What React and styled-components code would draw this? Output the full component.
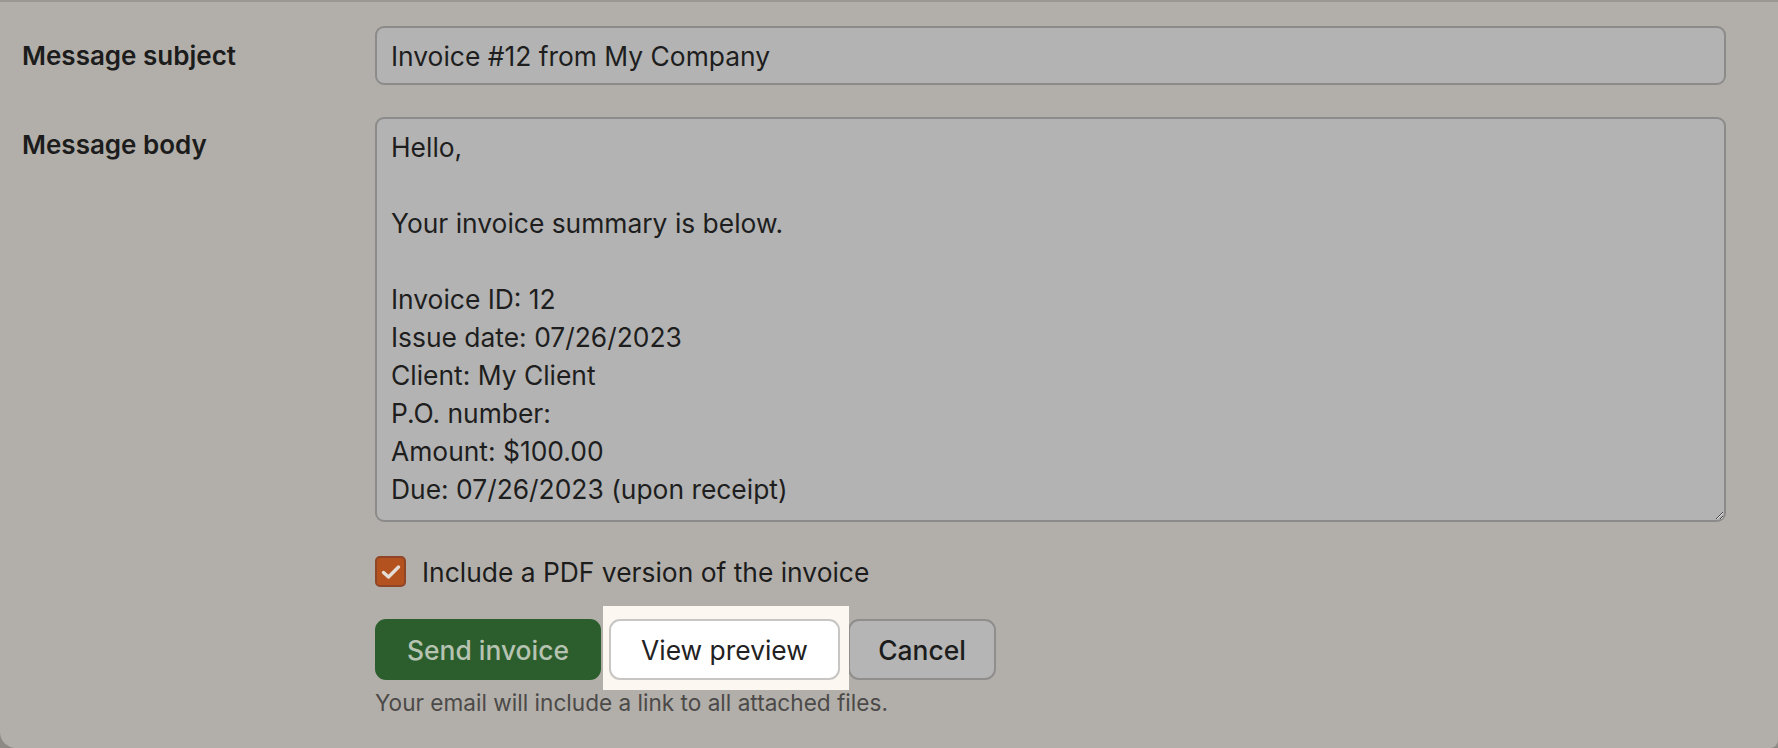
import React, { useState } from 'react';
import styled, { createGlobalStyle } from 'styled-components';

const GlobalStyle = createGlobalStyle`
  html, body {
    margin: 0;
    padding: 0;
    background: #8d8a86;
  }
  body {
    font-family: Inter, "Noto Sans", "Liberation Sans", sans-serif;
    color: #1d1d1d;
  }
  * { box-sizing: border-box; }
`;

const Card = styled.div`
  width: 1778px;
  height: 748px;
  background: #b2afaa;
  border-top: 2px solid #9b9792;
  border-radius: 0 0 8px 16px;
  padding: 24px 52px 0 22px;
  overflow: hidden;
`;

const Form = styled.form`
  display: grid;
  grid-template-columns: 353px 1fr;
  row-gap: 32px;
`;

const Label = styled.label`
  font-size: 26px;
  font-weight: 600;
  color: #1c1c1c;
  line-height: ${p => p.$lineHeight || '59px'};
  padding-top: ${p => p.$offset || '0'};
`;

const fieldBase = `
  width: 100%;
  font-family: Inter, "Noto Sans", "Liberation Sans", sans-serif;
  font-size: 26.4px;
  color: #1e1e1e;
  background: #b3b3b3;
  border: 2px solid #8c8b8a;
  border-radius: 9px;
  outline: none;
`;

const TextInput = styled.input`
  ${fieldBase}
  height: 59px;
  padding: 0 14px;
`;

const TextArea = styled.textarea`
  ${fieldBase}
  height: 405px;
  padding: 9px 14px;
  line-height: 38px;
  resize: vertical;
  display: block;
`;

const Actions = styled.div`
  grid-column: 2;
  display: flex;
  flex-direction: column;
  margin-top: 2px;
`;

const CheckRow = styled.label`
  display: flex;
  align-items: center;
  gap: 16px;
  height: 31px;
  font-size: 26.4px;
  color: #1c1c1c;
  cursor: pointer;
`;

const CheckBox = styled.span`
  width: 31px;
  height: 31px;
  border-radius: 5px;
  background: ${p => (p.$checked ? '#b3521f' : '#b3b3b3')};
  border: 2px solid ${p => (p.$checked ? '#8f4526' : '#8c8b8a')};
  display: flex;
  align-items: center;
  justify-content: center;
`;

const ButtonRow = styled.div`
  display: flex;
  align-items: center;
  gap: 8px;
  margin-top: 32px;
`;

const Button = styled.button`
  width: ${p => p.$width};
  height: 61px;
  padding: 0;
  font-family: Inter, "Noto Sans", "Liberation Sans", sans-serif;
  font-size: 26.4px;
  font-weight: ${p => p.$weight || 500};
  border-radius: 11px;
  cursor: pointer;
  background: ${p => p.$bg};
  color: ${p => p.$color};
  border: 2px solid ${p => p.$border};
`;

const Spotlight = styled.span`
  position: relative;
  display: inline-flex;
  z-index: 0;

  &::before {
    content: '';
    position: absolute;
    top: -13px;
    bottom: -10px;
    left: -6px;
    right: -9px;
    background: #fcf7f1;
    z-index: -1;
  }
`;

const Hint = styled.p`
  margin: 10px 0 0;
  font-size: 22.6px;
  line-height: 26px;
  color: #4c4a48;
`;

const body = `Hello,

Your invoice summary is below.

Invoice ID: 12
Issue date: 07/26/2023
Client: My Client
P.O. number: 
Amount: $100.00
Due: 07/26/2023 (upon receipt)`;

export default function App() {
  const [subject, setSubject] = useState('Invoice #12 from My Company');
  const [message, setMessage] = useState(body);
  const [attachPdf, setAttachPdf] = useState(true);

  return (
    <>
      <GlobalStyle />
      <Card>
        <Form onSubmit={e => e.preventDefault()}>
          <Label htmlFor="subject">Message subject</Label>
          <TextInput id="subject" value={subject} onChange={e => setSubject(e.target.value)} />

          <Label htmlFor="body" $lineHeight="38px" $offset="9px">Message body</Label>
          <TextArea id="body" value={message} onChange={e => setMessage(e.target.value)} />

          <Actions>
            <CheckRow onClick={() => setAttachPdf(v => !v)}>
              <CheckBox $checked={attachPdf}>
                {attachPdf && (
                  <svg width="20" height="16" viewBox="0 0 20 16" fill="none">
                    <path d="M2.5 8.5 L7.5 13 L17.5 3" stroke="#e4dcd6" strokeWidth="3.4" strokeLinecap="round" strokeLinejoin="round" />
                  </svg>
                )}
              </CheckBox>
              Include a PDF version of the invoice
            </CheckRow>

            <ButtonRow>
              <Button type="submit" $width="226px" $bg="#2c5e2d" $border="#2c5e2d" $color="#b7c3b2" $weight={500}>
                Send invoice
              </Button>
              <Spotlight>
                <Button type="button" $width="231px" $bg="#ffffff" $border="#c8c6c4" $color="#222222" $weight={400}>
                  View preview
                </Button>
              </Spotlight>
              <Button type="button" $width="148px" $bg="#b5b5b5" $border="#8f8e8d" $color="#1c1c1c" $weight={450}>
                Cancel
              </Button>
            </ButtonRow>

            <Hint>Your email will include a link to all attached files.</Hint>
          </Actions>
        </Form>
      </Card>
    </>
  );
}
